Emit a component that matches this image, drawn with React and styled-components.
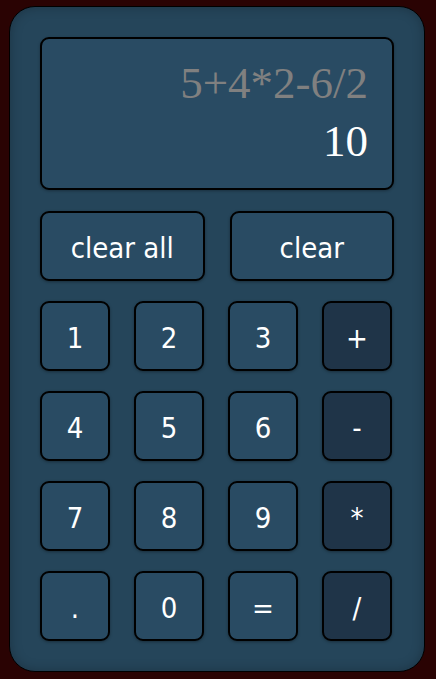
import React from "react";
import styled, { createGlobalStyle } from "styled-components";

const Global = createGlobalStyle`
  html, body { margin: 0; padding: 0; background: #2a0303; }
  body { padding: 6px 11px 8px 9px; }
  * { box-sizing: border-box; }
`;

const Card = styled.div`
  width: 416px;
  height: 666px;
  background: #25455a;
  border: 1px solid #000;
  border-radius: 26px;
  padding: 30px;
  display: flex;
  flex-direction: column;
  box-shadow: inset 0 0 12px rgba(0, 0, 0, 0.25);
`;

const Display = styled.div`
  height: 153px;
  background: #294b63;
  border: 2px solid #000;
  border-radius: 9px;
  padding: 15px 24px 0 0;
  display: flex;
  flex-direction: column;
  align-items: flex-end;
  font-family: "Liberation Serif", "Times New Roman", serif;
  box-shadow: 0 1px 3px rgba(0, 0, 0, 0.3);
`;

const Expr = styled.div`
  color: #808080;
  font-size: 45px;
  line-height: 58px;
`;

const Result = styled.div`
  color: #fff;
  font-size: 45px;
  line-height: 58px;
`;

const ClearRow = styled.div`
  margin-top: 21px;
  display: grid;
  grid-template-columns: 1fr 1fr;
  gap: 25px;
`;

const Keys = styled.div`
  margin-top: 20px;
  display: grid;
  grid-template-columns: repeat(4, 70px);
  grid-auto-rows: 70px;
  column-gap: 24px;
  row-gap: 20px;
`;

const Key = styled.button`
  height: 70px;
  background: ${(p) => (p.$op ? "#1f3448" : "#294b63")};
  border: 2px solid #000;
  border-radius: 9px;
  color: #fff;
  font-family: "DejaVu Sans Condensed", "DejaVu Sans", sans-serif;
  font-stretch: condensed;
  font-size: 29px;
  padding: 3px 0 0 0;
  display: flex;
  align-items: center;
  justify-content: center;
  box-shadow: 0 1px 3px rgba(0, 0, 0, 0.35);
  cursor: pointer;
`;

const keys = [
  ["1", false], ["2", false], ["3", false], ["+", true],
  ["4", false], ["5", false], ["6", false], ["-", true],
  ["7", false], ["8", false], ["9", false], ["*", true],
  [".", false], ["0", false], ["=", false], ["/", true],
];

export default function App() {
  return (
    <>
      <Global />
      <Card>
        <Display>
          <Expr>5+4*2-6/2</Expr>
          <Result>10</Result>
        </Display>
        <ClearRow>
          <Key>clear all</Key>
          <Key>clear</Key>
        </ClearRow>
        <Keys>
          {keys.map(([k, op]) => (
            <Key key={k} $op={op}>{k}</Key>
          ))}
        </Keys>
      </Card>
    </>
  );
}
